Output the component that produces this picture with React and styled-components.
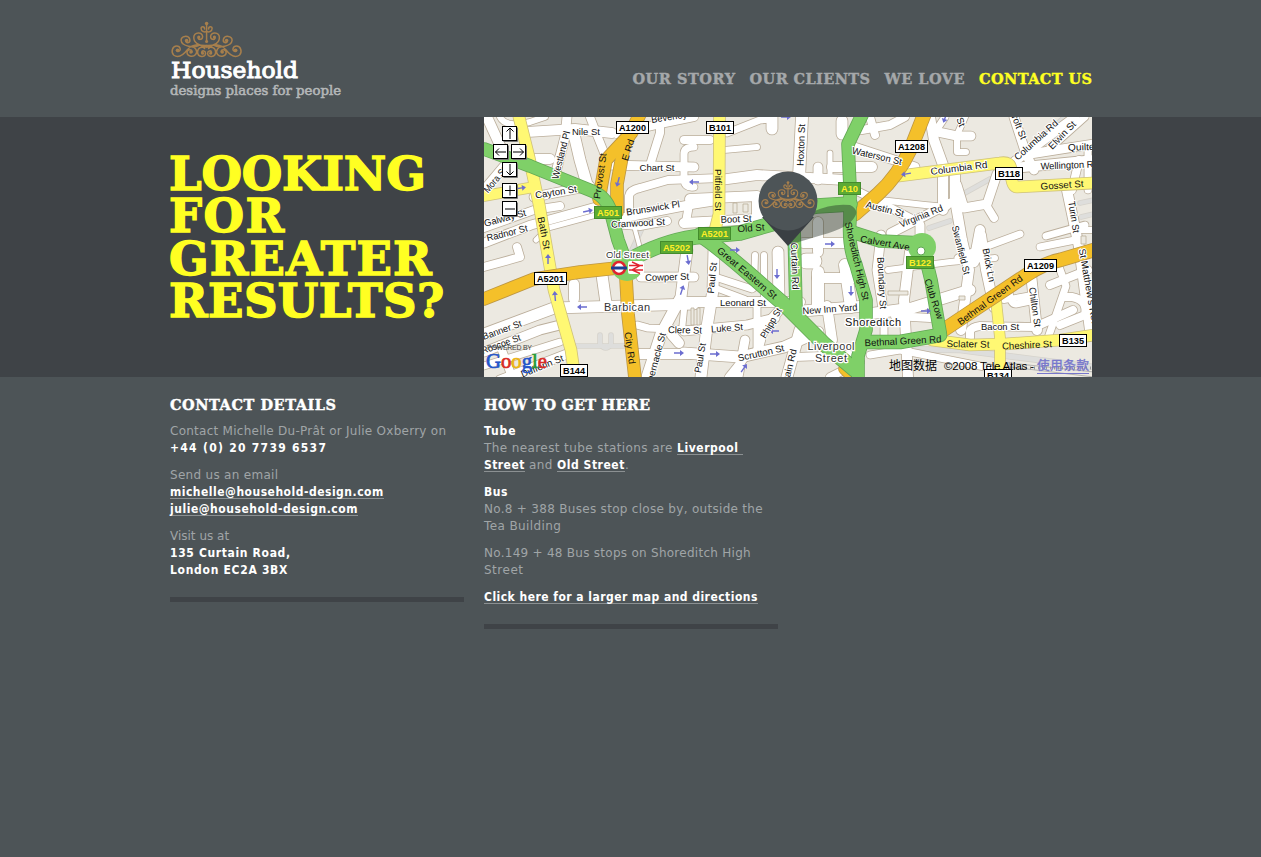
import React from "react";
import styled, { createGlobalStyle } from "styled-components";

const Global = createGlobalStyle`
  * { box-sizing: border-box; }
  body { margin: 0; background: #4d5457; }
`;

const slab = '"DejaVu Serif", "Liberation Serif", serif';
const sans = '"DejaVu Sans", Verdana, sans-serif';

const Page = styled.div`
  min-height: 857px;
  background: #4d5457;
  font-family: ${sans};
`;
const Wrap = styled.div`
  width: 922px;
  margin-left: 170px;
  display: flex;
`;
const Header = styled(Wrap).attrs({ as: "header" })`
  height: 117px;
  justify-content: space-between;
`;
const LogoArt = styled.svg`
  display: block;
  width: 180px;
  height: 90px;
  margin-top: 15px;
`;
const Nav = styled.nav`
  display: flex;
  gap: 14.5px;
  padding-top: 69px;
`;
const NavLink = styled.a`
  font: bold 14.5px/20px ${slab};
  -webkit-text-stroke: 0.4px currentColor;
  letter-spacing: ${(p) => p.$track}px;
  margin-right: ${(p) => -p.$track}px;
  white-space: nowrap;
  color: ${(p) => (p.$active ? "#ffff22" : "#a5a8aa")};
`;
const Band = styled.section`
  height: 260px;
  background: #3f4347;
`;
const Headline = styled.h1`
  width: 314px;
  margin: 0;
  padding-top: 36px;
  font: bold 46.5px/42.3px ${slab};
  -webkit-text-stroke: 1.4px currentColor;
  color: #ffff22;
`;
const HeadLine = styled.span`
  display: block;
  margin-left: -1px;
  white-space: nowrap;
  letter-spacing: ${(p) => p.$track}px;
`;
const MapArt = styled.svg`
  display: block;
  width: 608px;
  height: 260px;
`;
const Columns = styled(Wrap).attrs({ as: "main" })`
  gap: 20px;
  align-items: flex-start;
`;
const Column = styled.section`
  width: 294px;
  padding: 18px 0 8px;
  border-bottom: 5px solid #3f4347;
  font-size: 12px;
  line-height: 17px;
  color: #a0a5a7;
`;
const ColumnTitle = styled.h2`
  margin: 0 0 8px;
  font: bold 14.5px/20px ${slab};
  -webkit-text-stroke: 0.4px currentColor;
  letter-spacing: ${(p) => p.$track}px;
  white-space: nowrap;
  color: #fff;
`;
const Para = styled.p`
  margin: 0 0 10px;
`;
const Line = styled.span`
  display: block;
  height: 17px;
  white-space: nowrap;
  letter-spacing: ${(p) => p.$track || 0}px;
`;
const Strong = styled.strong`
  font-stretch: condensed;
  letter-spacing: ${(p) => p.$track ?? 0.5}px;
  color: #fff;
`;
const Link = styled.a`
  display: inline-block;
  height: 15px;
  line-height: 17px;
  border-bottom: 1px solid #8b9092;
  font-weight: bold;
  font-stretch: condensed;
  letter-spacing: ${(p) => p.$track ?? 0.5}px;
  white-space: pre;
  color: #fff;
`;

const scroll =
  "M2 27 C7 21.5 14 22.5 19 28 C24 34.5 29 36.5 33 33.5 C36 30 34 24.5 30 24.5 C26 24.5 25 29.5 28.5 30 " +
  "M8 24 C12 26 25 25.5 25.5 18.8 C25.5 14 18 13.5 16.8 17.8 C16 21.5 20 22 20.8 20 " +
  "M17 25.5 C11 24 8.5 30 11 33 C14 36.5 20 34.5 19.5 30.5 C19 27.5 14.5 27.5 14.5 30.5 " +
  "M0 25.5 C5 25 9 26 9 30.5 C9 36 1.2 36.5 1 32 C1 29 4.5 28.5 5 31 " +
  "M0 24 C8 24.5 13 21 12.8 15.8 C12.5 10.5 4 10 4 15 C4 18.5 8 18.5 8.5 16.5 " +
  "M0 10 C2 11 5.5 10 5.5 7 C5.5 4.5 2 4.5 2 7.5";

function Ornament({ transform, color, weight = 1.5 }) {
  return (
    <g transform={transform} fill="none" stroke={color} strokeWidth={weight} strokeLinecap="round">
      <path d={scroll} />
      <path d={scroll} transform="scale(-1 1)" />
      <path d="M0 2V20" />
      <circle cy="2" r="1.8" fill={color} stroke="none" />
      <circle cy="20" r="1.5" fill={color} stroke="none" />
      {[-1, 1].map((s) => (
        <g key={s} fill={color} stroke="none">
          <circle cx={s * 29} cy="28.8" r="1.9" />
          <circle cx={s * 20} cy="19" r="1.8" />
          <circle cx={s * 7.8} cy="15.6" r="1.6" />
          <circle cx={s * 15.7} cy="30.6" r="1.7" />
          <circle cx={s * 4} cy="31.8" r="1.5" />
        </g>
      ))}
    </g>
  );
}

function Logo() {
  return (
    <LogoArt viewBox="170 15 180 90" fontFamily={slab}>
      <Ornament transform="translate(206.6 21.5)" color="#a77f4c" />
      <text x="171" y="78.2" fontSize="22.5" fill="#fff" stroke="#fff" strokeWidth="1" textLength="127" lengthAdjust="spacingAndGlyphs">Household</text>
      <text x="170" y="95.3" fontSize="12.6" fill="#b4b7b8" stroke="#b4b7b8" strokeWidth="0.55" textLength="171" lengthAdjust="spacingAndGlyphs">designs places for people</text>
    </LogoArt>
  );
}

// Street centre lines: [path, width]
const streets = [
  ["M527 132L575 129L612 133", 10], ["M617 134L660 124L694 117", 8], ["M487 117L503 152", 10],
  ["M500 117Q505 128 530 122L545 117", 6], ["M567 117L565 137L556 172", 9], ["M573 130L580 160L588 188", 11],
  ["M530 159L550 159", 10], ["M607 165L694 167", 9], ["M694 147Q684 147 684 154V180Q685 188 694 187", 7],
  ["M622 218L694 204L720 200", 9], ["M612 224L640 226L667 221", 8], ["M629 213V196Q630 190 640 188L668 180L720 178", 8],
  ["M534 197L590 186", 9], ["M484 228L534 210L560 206", 8], ["M484 243L531 225L600 206", 9], ["M484 190L511 158", 9],
  ["M590 117L597 135L607 160", 8], ["M660 117V133L650 165", 8], ["M536 240L548 228L600 214", 5], ["M634 226L640 248", 4],
  ["M720 180L757 175L845 180", 10], ["M724 150L757 147", 6], ["M772 117V129", 11], ["M802 117L799 178", 12],
  ["M818 167V180", 9], ["M830 153V180", 5], ["M832 167H872", 10], ["M851 146L894 160L915 167", 9],
  ["M842 121V134", 11], ["M862 130L890 125L905 117", 8], ["M870 117L875 135", 8], ["M690 199L757 196V219", 10],
  ["M684 223L760 219", 10], ["M690 199L686 222", 8], ["M818 222V252", 10], ["M803 243H850", 10],
  ["M760 197H805", 9], ["M845 185L885 205L912 219", 8], ["M880 200L925 205L947 207", 6],
  ["M684 140H710", 8], ["M727 133L760 120L772 119", 7], ["M930 117L934 140L943 165V210", 10],
  ["M938 132L957 136H971", 9], ["M965 117L957 135V152H966", 6], ["M945 117L935 132", 7],
  ["M955 175V200L962 240L969 270L961 330", 10], ["M957 185L964 208L987 204L997 174", 9],
  ["M986 205L994 218", 8], ["M891 233L950 203", 9], ["M920 225V242", 9], ["M1011 164L1075 117", 9],
  ["M1030 154L1094 144", 9], ["M1014 168L1094 160", 10], ["M1014 117L1026 154L1034 170", 9],
  ["M1048 150L1085 117", 7], ["M1067 190L1079 247L1090 330", 10], ["M1079 160L1072 190", 8],
  ["M958 258L985 247L1020 234", 7], ["M980 230L974 262", 10], ["M1046 236L1085 225", 7], ["M1040 247L1075 240", 7],
  ["M1088 150V190", 7], ["M1079 230L1094 230", 6], ["M517 247L520 257L484 267", 8], ["M484 334L554 308L694 304", 11],
  ["M484 352L540 330L560 325", 9], ["M500 380L567 354", 9], ["M484 366L560 342", 7], ["M500 345L512 377", 8],
  ["M641 277H694", 9], ["M574 284V299", 10], ["M602 275L606 303", 11], ["M687 250L681 297L661 334L647 377", 11],
  ["M637 325L648 328L690 330", 7], ["M637 354H700", 10], ["M672 335L679 343", 10], ["M684 310L682 330", 6],
  ["M714 250L713 290L707 327L701 377", 11], ["M684 302H800", 10], ["M712 276L752 289", 7], ["M713 287L745 299", 6],
  ["M684 331L747 325L775 318", 9], ["M786 303L764 327L758 350", 9], ["M684 353L740 357L784 347L818 332", 11],
  ["M745 340L738 377", 9], ["M729 377L745 357", 8], ["M764 255V300", 6], ["M755 255L754 288", 6],
  ["M778 252L779 300", 11], ["M757 303V350", 7], ["M800 330L787 377", 11], ["M802 311L866 306", 11],
  ["M806 261H814", 15], ["M817 278H860", 10], ["M818 272V306", 12], ["M845 265L851 307", 12], ["M827 306L832 340", 10],
  ["M795 357L850 355", 8], ["M881 235L877 270L884 315", 9], ["M868 314L912 308L970 290", 11],
  ["M888 270L950 262L995 258", 6], ["M910 252L904 300L908 377", 10], ["M884 337V320", 7], ["M930 318L895 316", 8],
  ["M981 235L986 270L994 307", 10], ["M1031 274L1037 330", 10], ["M970 338V331Q972 327 980 326L1035 327L1073 310", 8],
  ["M1008 285Q1010 305 1016 304L1035 300", 7], ["M1064 297H1072Q1088 300 1085 315L1060 325", 8], ["M1050 285L1088 270", 8],
  ["M1004 300L1032 295", 6], ["M1058 264L1066 286L1048 338", 7], ["M870 355L900 350L990 368", 7], ["M830 377L860 362", 8],
];

const lanes = [
  ["M576 346H624", 4], ["M600 335V344Q606 352 611 344V335", 4], ["M643 226L632 250", 4],
  ["M963 194L990 179", 4], ["M929 228L950 221", 4], ["M1035 143L1064 117", 3], ["M1080 203L1094 200", 4],
  ["M1081 217L1094 214", 4], ["M884 349L960 350L1094 367", 5], ["M938 132L952 136", 4],
];

const yellow = [
  ["M519 117L529 157L539 204L554 290L571 350L575 378", 11], ["M484 196L534 187", 10], ["M719.5 117L719 214L715 230", 11],
  ["M899 176L1000 163Q1011 161 1011 170Q1011 187 1017 187L1094 183", 11], ["M996 300L1000 338V378", 10],
  ["M932 340L970 345L1005 344L1061 340L1094 335", 11],
];
const orange = [
  ["M641 112L624 146L617 184V212", 12], ["M632 132L606 160L599 199", 12], ["M484 299L534 279L580 272L617 268", 12],
  ["M626 278L628 314L635 378", 12], ["M924 115L911 148Q898 176 878 194L855 214", 13],
  ["M942 331L1028 274Q1045 263 1060 260L1094 250", 13], ["M844 369L855 380", 10],
];
const green = [
  ["M484 149L530 166L592 191Q609 198 612 217L618 240L626 262", 12],
  ["M626 262Q660 242 695 237L740 233L775 223Q795 208 817 206L850 204", 14],
  ["M700 235Q712 242 747 272L787 307L824 344L855 370", 14],
  ["M862 115L848 144L850 187V220Q848 246 856 265L866 300V330L858 356V380", 12],
  ["M794 225L796 310", 12], ["M852 232L880 241L924 243", 12], ["M922 243L931 280L940 332", 12],
  ["M866 342L900 342L940 335", 13],
];

function Roads({ list, fill, edge }) {
  return (
    <g fill="none" strokeLinejoin="round" strokeLinecap="round">
      {list.map(([d, w]) => <path key={d} d={d} stroke={edge} strokeWidth={w + 1.6} />)}
      {list.map(([d, w]) => <path key={d} d={d} stroke={fill} strokeWidth={w} />)}
    </g>
  );
}

// Street names: [text, centre x, centre y, rotation, length]
const names = [
  ["Nile St", 586, 132, 0, 28], ["Westland Pl", 561, 155, -76, 49], ["E Rd", 628, 150, -72, 22], ["Provost St", 600, 176, -82, 46],
  ["Chart St", 657, 168, 0, 35], ["Cayton St", 556, 192, -9, 42], ["Mora St", 495, 180, -50, 30], ["Galway St", 505, 218, -15, 43],
  ["Radnor St", 507, 233, -14, 42], ["Bath St", 544, 233, 79, 33], ["Brunswick Pl", 653, 208, -9, 54], ["Cranwood St", 638, 223, -3, 54],
  ["Beverley", 669, 117, -9, 36], ["Pitfield St", 718, 190, 90, 42], ["Boot St", 736, 219, -2, 31], ["Old St", 751, 228, -4, 27],
  ["Hoxton St", 801, 145, -88, 42], ["Waterson St", 877, 156, 13, 51], ["Austin St", 885, 209, 14, 39], ["Virginia Rd", 921, 216, -22, 46],
  ["Columbia Rd", 959, 168, -7, 57], ["Columbia Rd", 1036, 140, -42, 55], ["Elwin St", 1062, 135, -46, 35], ["Quilter", 1083, 147, -2, 30],
  ["Wellington Row", 1073, 165, -2, 65], ["Gosset St", 1062, 185, -4, 43], ["Turin St", 1074, 217, 81, 32], ["Croft St", 1018, 124, 68, 32],
  ["Calvert Ave", 885, 243, 10, 50], ["Shoreditch High St", 857, 261, 77, 80], ["Curtain Rd", 795, 266, 88, 47],
  ["Great Eastern St", 747, 273, 40, 75], ["Paul St", 712, 278, -84, 31], ["Cowper St", 667, 277, -2, 44], ["Leonard St", 743, 303, 0, 46],
  ["New Inn Yard", 830, 309, -4, 55], ["Boundary St", 882, 283, 87, 52], ["Luke St", 727, 328, -4, 32], ["Clere St", 685, 330, 1, 34],
  ["Phipp St", 771, 323, -60, 33], ["Scrutton St", 761, 353, -13, 47], ["Paul St", 700, 358, -80, 30], ["Curtain Rd", 788, 372, -76, 47],
  ["Tabernacle St", 655, 362, -75, 60], ["City Rd", 630, 348, 82, 32], ["Banner St", 502, 330, -20, 41], ["Roscoe St", 501, 344, -20, 41],
  ["Dufferin St", 542, 366, -22, 45], ["Bethnal Green Rd", 903, 341, -3, 77], ["Bethnal Green Rd", 990, 300, -36, 78],
  ["Club Row", 934, 299, 72, 42], ["Brick Ln", 989, 265, 79, 34], ["Swanfield St", 961, 250, 76, 50], ["Chilton St", 1035, 307, 82, 40],
  ["Bacon St", 1000, 327, 0, 38], ["Sclater St", 968, 344, 1, 43], ["Cheshire St", 1027, 345, -3, 50], ["St Matthew's Row", 1089, 288, 80, 80],
  ["St", 961, 122, 68, 9],
];
const onMainRoad = new Set(["E Rd", "Provost St", "Bath St", "Pitfield St", "Old St", "Calvert Ave", "Shoreditch High St", "Great Eastern St", "City Rd", "Bethnal Green Rd", "Club Row", "Sclater St", "Cheshire St", "Gosset St"]);

// Road numbers: [text, x, y, width, primary]
const shields = [
  ["A1200", 616.5, 121.5, 32], ["B101", 706.5, 121.5, 27], ["A1208", 895.5, 140.5, 32], ["B118", 995.5, 167.5, 27],
  ["A5201", 534.5, 272.5, 32], ["A1209", 1024.5, 259.5, 32], ["B135", 1059.5, 334.5, 27], ["B144", 560.5, 364.5, 27], ["B134", 984.5, 369.5, 27],
  ["A501", 594.5, 206.5, 27, 1], ["A5201", 698.5, 227.5, 32, 1], ["A5202", 660.5, 241.5, 32, 1], ["A10", 838.5, 182.5, 22, 1], ["B122", 906.5, 256.5, 27, 1],
];

// One-way arrows: [x, y, rotation]
const arrows = [
  [521, 188, -8], [588, 211, -12], [618, 182, 105], [694, 182, 180], [786, 117, 0], [830, 244, 0], [906, 174, 170],
  [548, 259, -90], [555, 296, -95], [582, 307, 180], [688, 260, 80], [682, 290, -72], [679, 353, 0], [735, 250, 0], [777, 274, 90],
  [851, 291, 90], [774, 331, 180], [715, 354, 0], [744, 368, -55], [926, 311, 0], [945, 118, 110],
];

const controls = [
  ["M510 139V128M506.5 131.5L510 128L513.5 131.5", 502.5, 126.5], ["M506 152H495.5M499 148.5L495.5 152L499 155.5", 493.5, 144.5],
  ["M513 152H523.5M520 148.5L523.5 152L520 155.5", 511.5, 144.5], ["M510 164V175M506.5 171.5L510 175L513.5 171.5", 502.5, 162.5],
  ["M505 190.5H515M510 185.5V195.5", 502.5, 183.5], ["M505 209H515", 502.5, 201.5],
];

function StreetMap() {
  return (
    <MapArt viewBox="484 117 608 260" fontFamily='"Liberation Sans", Arial, sans-serif'>
      <rect x="484" y="117" width="608" height="260" fill="#ece9e1" />
      <Roads list={lanes} fill="#dededc" edge="#d6d3cc" />
      <Roads list={streets} fill="#fff" edge="#bbae9b" />
      <g fill="none" stroke="#999" strokeWidth="0.7">
        <path d="M985 364L1094 377M1000 362L1094 372M1010 372V362" />
        <path d="M990 368H1094" strokeWidth="3" strokeDasharray="1 3" />
      </g>
      <path d="M733 203h4v10h-4zM743 204h5v8h-5zM1081 236h5v8h-5zM691 308h3v17h-3zM697 308h3v17h-3zM888 291h20v4h-20zM959 296h6v4h-6z" fill="#ece9e1" stroke="#bbae9b" strokeWidth="0.8" />
      <Roads list={yellow} fill="#fff873" edge="#cfc27a" />
      <Roads list={orange} fill="#f4c02a" edge="#bd9642" />
      <Roads list={green} fill="#7fd068" edge="#62a855" />
      <ellipse cx="627" cy="266" rx="16" ry="15" fill="#7fd068" />
      <circle cx="922" cy="247" r="14" fill="#7fd068" />
      <circle cx="921" cy="251" r="4" fill="#fff" stroke="#62a855" />
      {arrows.map(([x, y, a]) => (
        <path key={`${x}-${y}`} transform={`translate(${x} ${y}) rotate(${a})`} d="M-5 -.7H1V-3L5 0L1 3V.7H-5Z" fill="#6b6dd0" />
      ))}
      <g fontSize="9.6" textAnchor="middle" fill="#111">
        {names.map(([t, x, y, a, len]) => (
          <text key={`${t}-${x}`} transform={`translate(${x} ${y}) rotate(${a})`} y="3.3" textLength={len} lengthAdjust="spacingAndGlyphs"
            stroke={onMainRoad.has(t) ? "none" : "#fff"} strokeWidth="2" paintOrder="stroke">{t}</text>
        ))}
      </g>
      <g fontWeight="bold" fontSize="9.5" textAnchor="middle">
        {shields.map(([t, x, y, w, primary]) => (
          <g key={t + x}>
            <rect x={x} y={y} width={w} height="12" fill={primary ? "#5caa35" : "#fff"} stroke={primary ? "#438c2c" : "#000"} strokeWidth="1" />
            <text x={x + w / 2} y={y + 9.5} fill={primary ? "#ffef27" : "#000"} textLength={w - 5} lengthAdjust="spacingAndGlyphs">{t}</text>
          </g>
        ))}
      </g>
      <g textAnchor="middle" stroke="#fff" strokeWidth="2.5" paintOrder="stroke" fill="#333">
        <text x="627.5" y="258" fontSize="9.6" textLength="43">Old Street</text>
        <text x="627" y="311" fontSize="11" textLength="46">Barbican</text>
        <text x="873" y="326" fontSize="11" fill="#111" textLength="56">Shoreditch</text>
        <text x="831" y="350" fontSize="11" textLength="47">Liverpool</text>
        <text x="831" y="362" fontSize="11" textLength="32">Street</text>
      </g>
      <circle cx="619" cy="268" r="6" fill="#fff" stroke="#e1232e" strokeWidth="2.5" />
      <path d="M611 268H627" stroke="#1c3f94" strokeWidth="3" />
      <rect x="628" y="261" width="16" height="13" rx="2" fill="#fff" />
      <path d="M629 265.5H643M629 270H643M632 262L640 265.5L632 270L640 273.5" stroke="#e1232e" strokeWidth="1.4" fill="none" />
      <path d="M789 244L812 212Q832 203 850 205Q860 210 854 218Q848 228 822 235L792 244Z" fill="#1f2a22" fillOpacity=".42" />
      <path d="M762 217L788 246L814 217Z" fill="#3a3f43" />
      <circle cx="788" cy="201" r="29.5" fill="#4d5457" />
      <Ornament transform="translate(788 181) scale(.76)" color="#a77f4c" />
      {controls.map(([d, x, y]) => (
        <g key={d}>
          <path d={`M${x + 1} ${y + 15}H${x + 15}V${y + 1}`} fill="none" stroke="#777" />
          <rect x={x} y={y} width="14" height="14" fill="#fff" stroke="#000" />
          <path d={d} fill="none" stroke="#000" />
        </g>
      ))}
      <text x="487" y="350" fontSize="7" fill="#444" textLength="45">POWERED BY</text>
      <text x="486" y="367.5" fontSize="21" fontFamily='"Liberation Serif", serif' textLength="61" lengthAdjust="spacingAndGlyphs">
        <tspan fill="#2455c9" stroke="#2455c9" strokeWidth=".7">G</tspan>
        <tspan fill="#d92c25" stroke="#d92c25" strokeWidth=".7">o</tspan>
        <tspan fill="#edb514" stroke="#edb514" strokeWidth=".7">o</tspan>
        <tspan fill="#2455c9" stroke="#2455c9" strokeWidth=".7">g</tspan>
        <tspan fill="#289c37" stroke="#289c37" strokeWidth=".7">l</tspan>
        <tspan fill="#d92c25" stroke="#d92c25" strokeWidth=".7">e</tspan>
      </text>
      <g fontFamily='"Liberation Sans", "Noto Sans CJK SC", sans-serif' fontSize="11.5">
        <text x="889" y="370" fontSize="12" textLength="48">地图数据</text>
        <text x="944" y="370" textLength="90">©2008 Tele Atlas -</text>
        <text x="1037" y="370" fontSize="12.5" fill="#7777cc" stroke="#7777cc" strokeWidth=".4" textLength="52">使用条款</text>
        <path d="M1037 373.5H1089" stroke="#7777cc" />
      </g>
    </MapArt>
  );
}

export default function App() {
  return (
    <Page>
      <Global />
      <Header>
        <Logo />
        <Nav>
          <NavLink $track={0.55}>OUR STORY</NavLink>
          <NavLink $track={0.4}>OUR CLIENTS</NavLink>
          <NavLink $track={0.45}>WE LOVE</NavLink>
          <NavLink $track={0.42} $active>CONTACT US</NavLink>
        </Nav>
      </Header>
      <Band>
        <Wrap>
          <Headline>
            <HeadLine $track={-0.2}>LOOKING</HeadLine>
            <HeadLine $track={1.5}>FOR</HeadLine>
            <HeadLine $track={1.1}>GREATER</HeadLine>
            <HeadLine $track={0.4}>RESULTS?</HeadLine>
          </Headline>
          <StreetMap />
        </Wrap>
      </Band>
      <Columns>
        <Column>
          <ColumnTitle $track={0.55}>CONTACT DETAILS</ColumnTitle>
          <Para>
            <Line $track={0.26}>Contact Michelle Du-Prât or Julie Oxberry on</Line>
            <Line><Strong $track={1.28}>+44 (0) 20 7739 6537</Strong></Line>
          </Para>
          <Para>
            <Line $track={0.3}>Send us an email</Line>
            <Line><Link>michelle@household-design.com</Link></Line>
            <Line><Link $track={0.53}>julie@household-design.com</Link></Line>
          </Para>
          <Para>
            <Line>Visit us at</Line>
            <Line><Strong $track={0.65}>135 Curtain Road,</Strong></Line>
            <Line><Strong $track={0.7}>London EC2A 3BX</Strong></Line>
          </Para>
        </Column>
        <Column>
          <ColumnTitle $track={0.2}>HOW TO GET HERE</ColumnTitle>
          <Para>
            <Line><Strong $track={0.9}>Tube</Strong></Line>
            <Line $track={0.4}>The nearest tube stations are <Link $track={0.55}>{"Liverpool "}</Link></Line>
            <Line $track={0.4}><Link $track={0.45}>Street</Link> and <Link $track={0.55}>Old Street</Link>.</Line>
          </Para>
          <Para>
            <Line><Strong $track={0.6}>Bus</Strong></Line>
            <Line $track={0.3}>No.8 + 388 Buses stop close by, outside the</Line>
            <Line $track={0.4}>Tea Building</Line>
          </Para>
          <Para>
            <Line $track={0.27}>No.149 + 48 Bus stops on Shoreditch High</Line>
            <Line $track={0.5}>Street</Line>
          </Para>
          <Para>
            <Line><Link $track={0.47}>Click here for a larger map and directions</Link></Line>
          </Para>
        </Column>
      </Columns>
    </Page>
  );
}
